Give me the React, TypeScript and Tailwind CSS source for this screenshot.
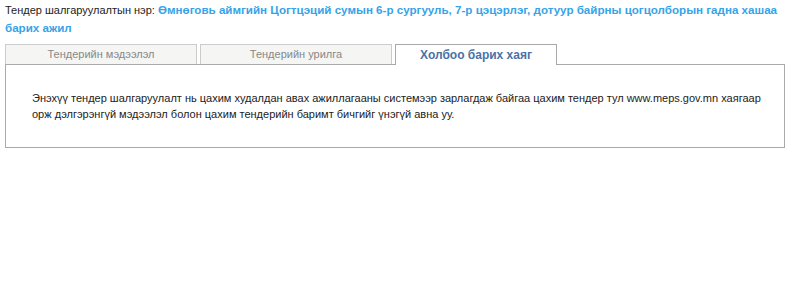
const tabs = [
  { label: "Тендерийн мэдээлэл", width: "w-[192px]", active: false },
  { label: "Тендерийн урилга", width: "w-[192px]", active: false },
  { label: "Холбоо барих хаяг", width: "w-[162px]", active: true },
]

export default function App() {
  return (
    <div className="min-h-[285px] bg-white px-[5px] pt-[1px] font-['Liberation_Sans',Arial,sans-serif] text-[11px] text-[#222]">
      {/* Tender name */}
      <p className="w-[780px] text-[11px] leading-[17px]">
        Тендер шалгаруулалтын нэр:{" "}
        <span className="text-[11.6px] font-bold text-[#36a3e8]">
          Өмнөговь аймгийн Цогтцэций сумын 6-р сургууль, 7-р цэцэрлэг, дотуур байрны цогцолборын гадна хашаа
          барих ажил
        </span>
      </p>

      {/* Tabs */}
      <div className="mt-[7px] flex gap-[3px]">
        {tabs.map((t) =>
          t.active ? (
            <div
              key={t.label}
              className={`${t.width} relative z-10 -mb-px flex h-[21px] items-center justify-center border border-b-0 border-[#aaa] bg-white pb-px text-[12px] font-bold text-[#4a72a8]`}
            >
              {t.label}
            </div>
          ) : (
            <div
              key={t.label}
              className={`${t.width} flex h-[20px] items-center justify-center border border-b-0 border-[#ccc] bg-[#f5f5f3] text-[11px] text-[#888]`}
            >
              {t.label}
            </div>
          ),
        )}
      </div>

      {/* Panel */}
      <div className="w-[780px] border border-[#aaa] py-[25px] pl-[26px] pr-[18px] text-[11px] leading-[16px] text-[#222]">
        Энэхүү тендер шалгаруулалт нь цахим худалдан авах ажиллагааны системээр зарлагдаж байгаа цахим тендер тул
        www.meps.gov.mn хаягаар орж дэлгэрэнгүй мэдээлэл болон цахим тендерийн баримт бичгийг үнэгүй авна уу.
      </div>
    </div>
  )
}
